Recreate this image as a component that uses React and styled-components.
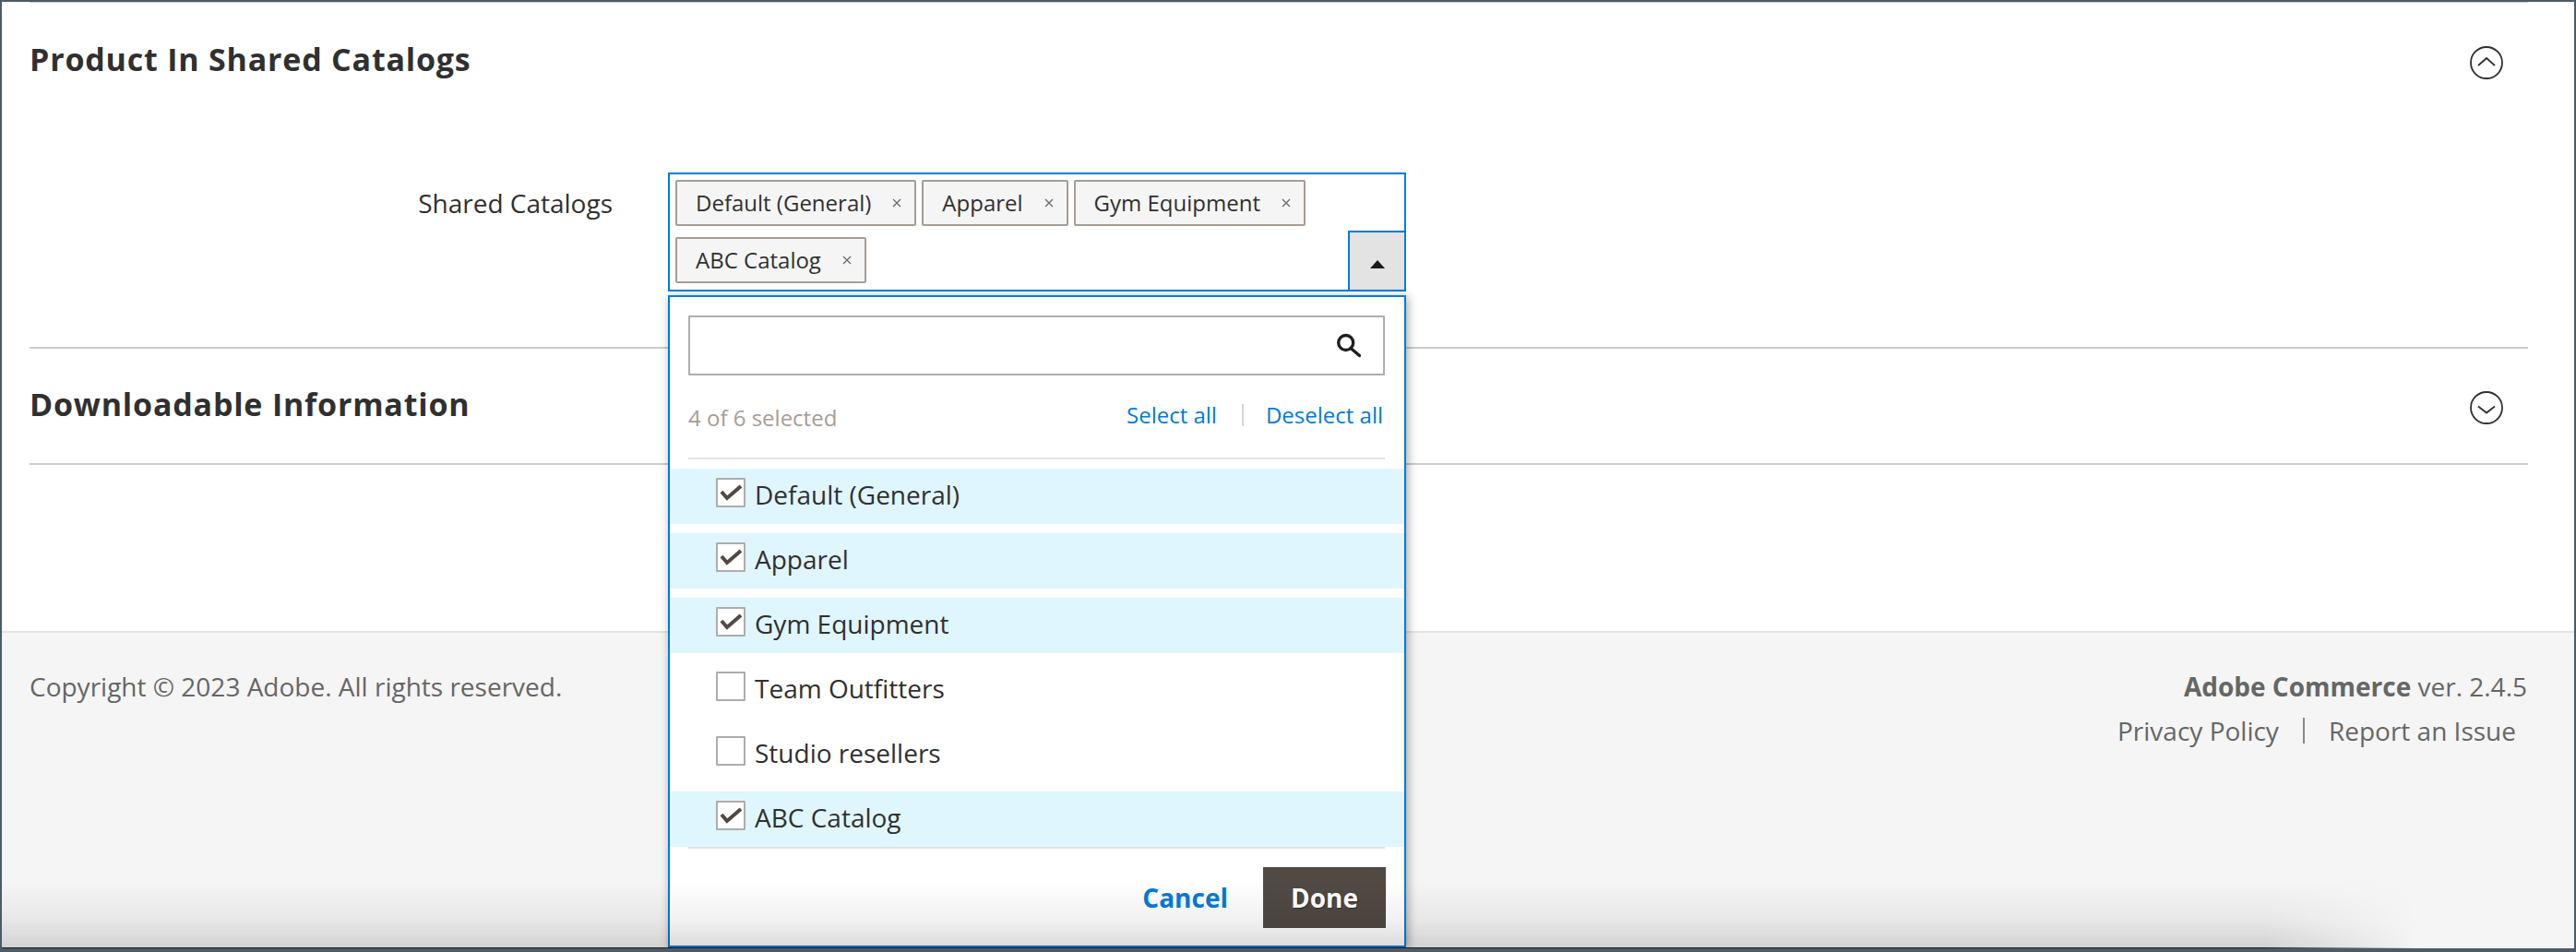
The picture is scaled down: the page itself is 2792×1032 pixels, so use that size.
import React from "react";
import styled, { createGlobalStyle } from "styled-components";

const Global = createGlobalStyle`
  html, body { margin: 0; padding: 0; background: #fff; }
  body { font-family: "Open Sans", "Noto Sans", sans-serif; color: #303030; }
  * { box-sizing: border-box; }
`;

const Frame = styled.div`
  position: relative;
  width: 2792px;
  height: 1032px;
  overflow: hidden;
  background: #fff;
  border-style: solid;
  border-color: #4a5c68;
  border-width: 2px 2px 4px 2px;
  display: flex;
  flex-direction: column;
`;

const Main = styled.main`
  flex: 0 0 682px;
  padding: 0 50px 0 30px;
`;

const Section = styled.section`
  border-top: ${(p) => (p.$ruled ? "1px solid #cccccc" : "0")};
  border-bottom: 2px solid #cccccc;
  height: ${(p) => p.$height}px;
`;

const SectionHeader = styled.header`
  display: flex;
  align-items: center;
  justify-content: space-between;
  height: ${(p) => p.$height}px;
  padding-right: 27px;
`;

const Title = styled.h2`
  margin: 0 0 4px;
  font-size: 34px;
  line-height: 44px;
  font-weight: 700;
  letter-spacing: 0.8px;
  color: #303030;
`;

const Field = styled.div`
  display: flex;
  align-items: flex-start;
  padding-top: 59px;
`;

const Label = styled.label`
  width: 632px;
  padding-top: 14px;
  text-align: right;
  font-size: 28px;
  line-height: 38px;
  color: #303030;
`;

const Control = styled.div`
  position: relative;
  width: 800px;
  margin-left: 60px;
`;

const Select = styled.div`
  position: relative;
  width: 800px;
  height: 129px;
  border: 2px solid #007bdb;
  background: #fff;
  padding: 6px;
  display: flex;
  flex-wrap: wrap;
  align-content: flex-start;
  gap: 12px 6px;
`;

const Chip = styled.span`
  display: inline-flex;
  align-items: center;
  height: 50px;
  padding: 0 14px 2px 20px;
  border: 2px solid #a79d95;
  border-radius: 2px;
  background: #f5f5f5;
  font-size: 24px;
  color: #303030;
`;

const ChipClose = styled.svg`
  width: 10px;
  height: 10px;
  margin: 2px 0 0 23px;
  stroke: #6a6a6a;
  stroke-width: 1.3;
  fill: none;
`;

const Toggle = styled.button`
  position: absolute;
  right: 0;
  bottom: 0;
  width: 61px;
  height: 64px;
  padding: 0;
  background: #e3e3e3;
  border: solid #007bdb;
  border-width: 2px 0 0 2px;
  display: flex;
  align-items: center;
  justify-content: center;
`;

const Arrow = styled.svg`
  width: 16px;
  height: 9px;
  margin-top: 6px;
  fill: #1a1a1a;
`;

const Dropdown = styled.div`
  position: absolute;
  z-index: 2;
  top: 133px;
  left: 0;
  width: 800px;
  height: 707px;
  background: #fff;
  border: 2px solid #007bdb;
  box-shadow: 2px 2px 10px rgba(0, 0, 0, 0.35);
  display: flex;
  flex-direction: column;
`;

const SearchBox = styled.div`
  margin: 20px 21px 0 20px;
  height: 65px;
  border: 2px solid #adadad;
  border-radius: 1px;
  background: #fff;
  display: flex;
  align-items: center;
  justify-content: flex-end;
  padding-right: 24px;
`;

const SearchIcon = styled.svg`
  width: 28px;
  height: 28px;
  fill: none;
  stroke: #1f1f1f;
  stroke-width: 3.4;
  stroke-linecap: round;
`;

const Summary = styled.div`
  margin: 0 21px 0 20px;
  height: 91px;
  display: flex;
  align-items: center;
  justify-content: space-between;
  border-bottom: 2px solid #e3e3e3;
  font-size: 24px;
`;

const Count = styled.span`
  color: #a79d95;
  padding-top: 2px;
`;

const Actions = styled.div`
  display: flex;
  align-items: center;
  margin-top: -4px;
  padding-right: 2px;
`;

const ActionLink = styled.a`
  color: #007bdb;
`;

const ActionSeparator = styled.span`
  width: 2px;
  height: 24px;
  margin: 0 24px 0 27px;
  background: #d6d6d6;
`;

const Options = styled.ul`
  list-style: none;
  margin: 10px 0 0;
  padding: 0;
  display: flex;
  flex-direction: column;
  gap: 10px;
`;

const Option = styled.li`
  height: 60px;
  display: flex;
  align-items: flex-start;
  padding-left: 50px;
  background: ${(p) => (p.$checked ? "#e0f6fe" : "#fff")};
  font-size: 28px;
  line-height: 36px;
  color: #303030;
`;

const Checkbox = styled.span`
  flex: none;
  width: 32px;
  height: 32px;
  margin-top: 10px;
  border: 2px solid #adadad;
  border-radius: 1px;
  background: #fff;
  display: flex;
  align-items: center;
  justify-content: center;
`;

const CheckMark = styled.svg`
  width: 28px;
  height: 28px;
  fill: none;
  stroke: #514943;
  stroke-width: 4;
`;

const OptionText = styled.span`
  margin: 10px 0 0 10px;
`;

const ListEnd = styled.div`
  margin: 0 21px 0 20px;
  height: 2px;
  background: #e3e3e3;
`;

const DropdownFooter = styled.div`
  margin-top: 20px;
  padding-right: 20px;
  display: flex;
  justify-content: flex-end;
  align-items: center;
  gap: 38px;
`;

const Cancel = styled.a`
  font-size: 28px;
  font-weight: 700;
  color: #007bdb;
`;

const Done = styled.button`
  width: 133px;
  height: 66px;
  border: 0;
  background: #514943;
  color: #fff;
  font-family: inherit;
  font-size: 28px;
  font-weight: 700;
  text-shadow: 1px 1px 1px rgba(0, 0, 0, 0.4);
`;

const CircleIcon = styled.svg`
  width: 36px;
  height: 36px;
  margin-top: 4px;
  fill: none;
  stroke: #303030;
  stroke-width: 1.8;
`;

const PageFooter = styled.footer`
  flex: 1;
  background: #f5f5f5;
  border-top: 2px solid #e3e3e3;
  padding: 39px 51px 0 30px;
  display: flex;
  justify-content: space-between;
  font-size: 28px;
  line-height: 38px;
  color: #666666;
`;

const Copyright = styled.div``;

const FooterRight = styled.div`
  display: flex;
  flex-direction: column;
  align-items: flex-end;
  gap: 10px;
`;

const Version = styled.div`
  strong {
    font-weight: 700;
  }
`;

const FooterLinks = styled.div`
  display: flex;
  align-items: center;
  padding-right: 12px;
`;

const FooterSep = styled.span`
  width: 2px;
  height: 28px;
  margin: 0 26px;
  background: #888;
`;

const BottomShade = styled.div`
  position: absolute;
  z-index: 3;
  left: 0;
  right: 0;
  bottom: 0;
  height: 73px;
  pointer-events: none;
  border-bottom: 1px solid #1c1c1c;
  background: linear-gradient(to bottom, rgba(0, 0, 0, 0) 0%, rgba(0, 0, 0, 0.055) 60%, rgba(0, 0, 0, 0.14) 100%);
  -webkit-mask-image: linear-gradient(to right, #000 88%, transparent 94%);
  mask-image: linear-gradient(to right, #000 88%, transparent 94%);
`;

const chips = ["Default (General)", "Apparel", "Gym Equipment", "ABC Catalog"];
const options = [
  { name: "Default (General)", checked: true },
  { name: "Apparel", checked: true },
  { name: "Gym Equipment", checked: true },
  { name: "Team Outfitters", checked: false },
  { name: "Studio resellers", checked: false },
  { name: "ABC Catalog", checked: true },
];

const Circle = ({ up }) => (
  <CircleIcon viewBox="0 0 36 36">
    <circle cx="18" cy="18" r="17" />
    <path d={up ? "M9 21 L18 13 L27 21" : "M9 16.5 L18 23.5 L27 16.5"} />
  </CircleIcon>
);

export default function App() {
  return (
    <Frame>
      <Global />
      <Main>
        <Section $height={376} $ruled>
          <SectionHeader $height={125}>
            <Title>Product In Shared Catalogs</Title>
            <Circle up />
          </SectionHeader>
          <Field>
            <Label>Shared Catalogs</Label>
            <Control>
              <Select>
                {chips.map((c) => (
                  <Chip key={c}>
                    {c}
                    <ChipClose viewBox="0 0 10 10">
                      <path d="M1 1 L9 9 M9 1 L1 9" />
                    </ChipClose>
                  </Chip>
                ))}
                <Toggle aria-label="Close">
                  <Arrow viewBox="0 0 16 9">
                    <path d="M8 0 L16 9 L0 9 Z" />
                  </Arrow>
                </Toggle>
              </Select>
              <Dropdown>
                <SearchBox>
                  <SearchIcon viewBox="0 0 28 28">
                    <circle cx="11.7" cy="10.5" r="8" />
                    <path d="M17 16.5 L26.5 24.5" />
                  </SearchIcon>
                </SearchBox>
                <Summary>
                  <Count>4 of 6 selected</Count>
                  <Actions>
                    <ActionLink>Select all</ActionLink>
                    <ActionSeparator />
                    <ActionLink>Deselect all</ActionLink>
                  </Actions>
                </Summary>
                <Options>
                  {options.map((o) => (
                    <Option key={o.name} $checked={o.checked}>
                      <Checkbox>
                        {o.checked && (
                          <CheckMark viewBox="0 0 28 28">
                            <path d="M4 13 L10 20 L25 7" />
                          </CheckMark>
                        )}
                      </Checkbox>
                      <OptionText>{o.name}</OptionText>
                    </Option>
                  ))}
                </Options>
                <ListEnd />
                <DropdownFooter>
                  <Cancel>Cancel</Cancel>
                  <Done>Done</Done>
                </DropdownFooter>
              </Dropdown>
            </Control>
          </Field>
        </Section>
        <Section $height={126}>
          <SectionHeader $height={124}>
            <Title>Downloadable Information</Title>
            <Circle />
          </SectionHeader>
        </Section>
      </Main>
      <PageFooter>
        <Copyright>Copyright © 2023 Adobe. All rights reserved.</Copyright>
        <FooterRight>
          <Version>
            <strong>Adobe Commerce</strong> ver. 2.4.5
          </Version>
          <FooterLinks>
            <span>Privacy Policy</span>
            <FooterSep />
            <span>Report an Issue</span>
          </FooterLinks>
        </FooterRight>
      </PageFooter>
      <BottomShade />
    </Frame>
  );
}
